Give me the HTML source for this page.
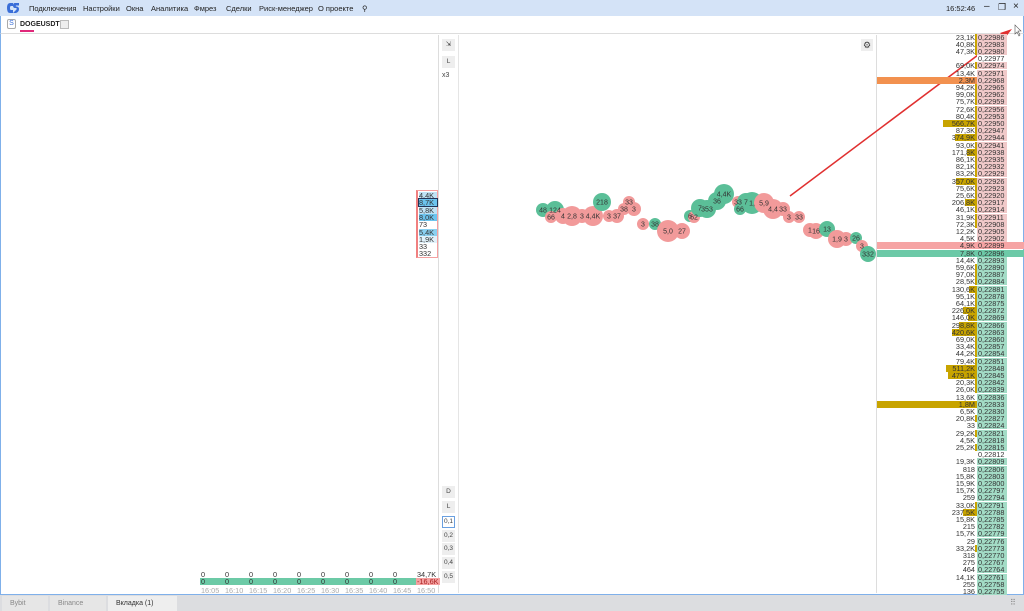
<!DOCTYPE html>
<html><head><meta charset="utf-8"><style>
*{margin:0;padding:0;box-sizing:border-box}
body{width:1024px;height:611px;overflow:hidden;background:#fff;font-family:"Liberation Sans","Noto Sans CJK SC",sans-serif;position:relative}
.abs{position:absolute}
#top{left:0;top:0;width:1024px;height:16px;background:#d4e3f7;font-size:7.5px;color:#222}
#top span{position:absolute;top:4px}
#hdr{left:0;top:16px;width:1024px;height:18px;background:#fff;border-left:1px solid #7fb0ea;border-right:1px solid #7fb0ea;border-bottom:1px solid #ddd}
#main{left:0;top:34px;width:1024px;height:561px;border:1.5px solid #7fb0ea;border-top:none}
#bot{left:0;top:595px;width:1024px;height:16px;background:#dcdde0}
.btn{position:absolute;background:#eee;font-size:6.5px;color:#444;text-align:center;line-height:12px;width:13px;height:12px}
.row{position:absolute;height:7.2px;font-size:7.3px;line-height:7.2px;color:#333;font-family:"Liberation Sans",sans-serif}
</style></head><body>
<div id="top" class="abs">
<svg class="abs" style="left:6px;top:2px" width="14" height="12" viewBox="0 0 14 12"><path d="M7 1H4Q1 1 1 6Q1 11 4 11H7V8H5Q4 8 4 6Q4 4 5 4H7Z" fill="#3a6ed8"/><path d="M13 1H9Q7 1 7 3.5Q7 6 9 6H10Q11 6 10.5 7.5L7 11H10Q13 10 13 7Q13 5 11 4.5H10Q9.5 4 10 3.5H13Z" fill="#3a6ed8"/></svg>
<span style="left:29px">Подключения</span><span style="left:83px">Настройки</span><span style="left:126px">Окна</span><span style="left:151px">Аналитика</span><span style="left:194px">Фмрез</span><span style="left:226px">Сделки</span><span style="left:259px">Риск-менеджер</span><span style="left:318px">О проекте</span><span style="left:362px">⚲</span>
<span style="left:946px">16:52:46</span><span style="left:984px;top:1px;font-size:10px">–</span><span style="left:998px;top:2px;font-size:9px">❐</span><span style="left:1013px;top:1px;font-size:10px">×</span>
</div>
<div id="hdr" class="abs">
<div class="abs" style="left:6px;top:3px;width:9px;height:10px;border:1px solid #aaa;border-radius:2px;font-size:7px;line-height:8px;text-align:center;color:#3a6ed8">S</div>
<div class="abs" style="left:19px;top:5px;font-size:7px;font-weight:bold;color:#222">DOGEUSDT</div>
<div class="abs" style="left:19px;top:14px;width:14px;height:2px;background:#e0287a"></div>
<div class="abs" style="left:59px;top:4px;width:9px;height:9px;border:1px solid #bbb;background:#eee"></div>
</div>
<div id="main" class="abs"></div>
<div class="abs" style="left:438px;top:35px;width:1px;height:558px;background:#ddd"></div>
<div class="abs" style="left:458px;top:35px;width:1px;height:558px;background:#e5e5e5"></div>
<div class="abs" style="left:876px;top:35px;width:1px;height:558px;background:#ddd"></div>
<div class="btn" style="left:442px;top:39px">⇲</div>
<div class="btn" style="left:442px;top:56px">L</div>
<div class="abs" style="left:442px;top:72px;font-size:7px;color:#444">x3</div>
<div class="abs" style="left:861px;top:39px;width:12px;height:12px;background:#eee;font-size:9px;line-height:12px;text-align:center;color:#444">⚙</div>
<div class="btn" style="left:442px;top:486px">D</div>
<div class="btn" style="left:442px;top:501px">L</div>
<div class="btn" style="left:442px;top:516px;border:1px solid #6aa0e0;background:#fff;line-height:10px">0,1</div>
<div class="btn" style="left:442px;top:530px">0,2</div>
<div class="btn" style="left:442px;top:543px">0,3</div>
<div class="btn" style="left:442px;top:557px">0,4</div>
<div class="btn" style="left:442px;top:571px">0,5</div>
<div id="lv" class="abs" style="left:416px;top:190px;width:22px;height:68px;border:1px solid #f4a0a0;border-left:2px solid #f08080"></div>
<div id="fp"></div>
<svg class="abs" style="left:0;top:0" width="1024" height="611" id="sv"></svg>
<div id="lad"></div>
<div id="bot" class="abs">
<div class="abs" style="left:2px;top:1px;width:46px;height:15px;background:#e6e6e6;font-size:7px;color:#888;line-height:15px;padding-left:8px">Bybit</div>
<div class="abs" style="left:50px;top:1px;width:56px;height:15px;background:#e6e6e6;font-size:7px;color:#888;line-height:15px;padding-left:8px">Binance</div>
<div class="abs" style="left:108px;top:1px;width:69px;height:15px;background:#eee;font-size:7px;color:#333;line-height:15px;padding-left:8px">Вкладка (1)</div>
<div class="abs" style="left:1010px;top:3px;font-size:8px;color:#888">⠿</div>
</div>
<script>
// left volume column
var lv=[["4,4K","#bfe3f5"],["8,7K","#6cc4ee"],["5,8K","#bfe3f5"],["8,0K","#6cc4ee"],["73",""],["5,4K","#8ad0f0"],["1,9K","#e0f1fa"],["33",""],["332",""]];
var h='';lv.forEach(function(r,i){h+='<div class="row" style="left:1px;width:18px;top:'+(1+i*7.3)+'px;background:'+(r[1]||'transparent')+';'+(i==1?'outline:1px solid #235;':'')+'">'+r[0]+'</div>'});
document.getElementById('lv').innerHTML=h;
// footprint bottom
var f='';for(var i=0;i<10;i++){var x=201+i*24;
f+='<div class="row" style="left:'+x+'px;top:571px;width:24px">'+(i<9?'0':'34,7K')+'</div>';
f+='<div class="row" style="left:'+(x-1)+'px;top:578px;width:24px;background:'+(i<9?'#6ccaa6':'#f4a0a0')+';color:'+(i<9?'#333':'#a22')+';padding-left:1px">'+(i<9?'0':'-16,6K')+'</div>';
var m=5+i*5;f+='<div class="row" style="left:'+x+'px;top:587px;width:24px;color:#aaa">16:'+(m<10?'0'+m:m)+'</div>';}
f+='<div class="abs" style="left:438px;top:571px;width:1px;height:24px"></div>';
document.getElementById('fp').innerHTML=f;
// bubbles
var G='#5bbf98',R='#f29a9a';
var B=[[543,210,7,G,"48"],[555,210,9,G,"124"],[551,217,6,R,"66"],[563,216,8,R,"4"],[572,216,10,R,"2,8"],[582,216,7,R,"3"],[593,216,10,R,"4,4K"],[602,202,9,G,"218"],[609,216,6,R,"3"],[617,216,7,R,"37"],[629,202,6,R,"33"],[624,209,6,R,"38"],[634,209,7,R,"3"],[643,224,6,R,"3"],[655,224,6,G,"38"],[668,231,11,R,"5,0"],[682,231,8,R,"27"],[690,216,6,G,"6"],[694,217,6,R,"62"],[700,208,9,G,"7"],[707,209,9,G,"353"],[717,201,9,G,"36"],[724,194,10,G,"4,4K"],[738,202,6,R,"33"],[740,209,6,G,"66"],[746,202,9,G,"7"],[752,203,11,G,"1,"],[764,203,10,R,"5,9"],[773,209,10,R,"4,4"],[783,209,7,R,"33"],[789,217,6,R,"3"],[799,217,6,R,"33"],[810,230,7,R,"1"],[816,231,8,R,"16"],[827,229,8,G,"13"],[837,239,9,R,"1,9"],[846,239,7,R,"3"],[856,238,6,G,"26"],[862,246,6,R,"3"],[868,254,8,G,"332"]];
var s='';B.forEach(function(b){s+='<circle cx="'+b[0]+'" cy="'+b[1]+'" r="'+b[2]+'" fill="'+b[3]+'"/>';});
B.forEach(function(b){s+='<text x="'+b[0]+'" y="'+(b[1]+2.5)+'" font-size="7" text-anchor="middle" fill="#333" font-family="Liberation Sans">'+b[4]+'</text>';});
s+='<line x1="790" y1="196" x2="1006" y2="34" stroke="#e03030" stroke-width="1.5"/><path d="M1012 29L1000 33L1005 38Z" fill="#e03030"/>';
s+='<path d="M1015 25V34L1017 32L1019 36L1020 35L1018 31H1021Z" fill="#fff" stroke="#555" stroke-width="0.6"/>';
document.getElementById('sv').innerHTML=s;
// ladder
var V=["23,1K","40,8K","47,3K","","69,0K","13,4K","2,3M","94,2K","99,0K","75,7K","72,6K","80,4K","566,7K","87,3K","374,9K","93,0K","171,8K","86,1K","82,1K","83,2K","357,0K","75,6K","25,6K","206,8K","46,1K","31,9K","72,3K","12,2K","4,5K","4,9K","7,8K","14,4K","59,6K","97,0K","28,5K","130,6K","95,1K","64,1K","226,0K","146,0K","298,8K","420,6K","69,0K","33,4K","44,2K","79,4K","511,2K","479,1K","20,3K","26,0K","13,6K","1,8M","6,5K","20,8K","33","29,2K","4,5K","25,2K","","19,3K","818","15,8K","15,9K","15,7K","259","33,0K","237,5K","15,8K","215","15,7K","29","33,2K","318","275","464","14,1K","255","136"];
function num(t){if(!t)return 0;var n=parseFloat(t.replace(',','.'));if(t.indexOf('M')>0)n*=1e6;else if(t.indexOf('K')>0)n*=1e3;return n;}
var L='';V.forEach(function(v,i){var y=33.5+i*7.2,p=22986-3*i,ps='0,'+p;var n=num(v);
if(i==29)L+='<div class="abs" style="left:877px;top:'+y+'px;width:147px;height:7.2px;background:#f6a4a4"></div>';
if(i==30)L+='<div class="abs" style="left:877px;top:'+y+'px;width:147px;height:7.2px;background:#6cc9a7"></div>';
if(n>=1e6){L+='<div class="abs" style="left:877px;top:'+y+'px;width:100px;height:7.2px;background:'+(i==6?'#f2914f':'#c8a400')+'"></div>';}
else if(n>1e5){var w=Math.min(90,n/566700*34);L+='<div class="abs" style="left:'+(977-w)+'px;top:'+y+'px;width:'+w+'px;height:7.2px;background:#c8a400"></div>';}
else if(n>2e4){L+='<div class="abs" style="left:975px;top:'+y+'px;width:2px;height:7.2px;background:#c8a400"></div>';}
var bg=v===''?'#fff':(i<30?'#f0c9c9':'#a3dcc6');if(i==29)bg='#f6a4a4';if(i==30)bg='#6cc9a7';
L+='<div class="row" style="left:900px;width:76px;top:'+y+'px;text-align:right;padding-right:1px">'+v+'</div>';
L+='<div class="row" style="left:977px;width:30px;top:'+y+'px;background:'+bg+';padding-left:1px">'+ps+'</div>';});
document.getElementById('lad').innerHTML=L;
</script>
</body></html>
